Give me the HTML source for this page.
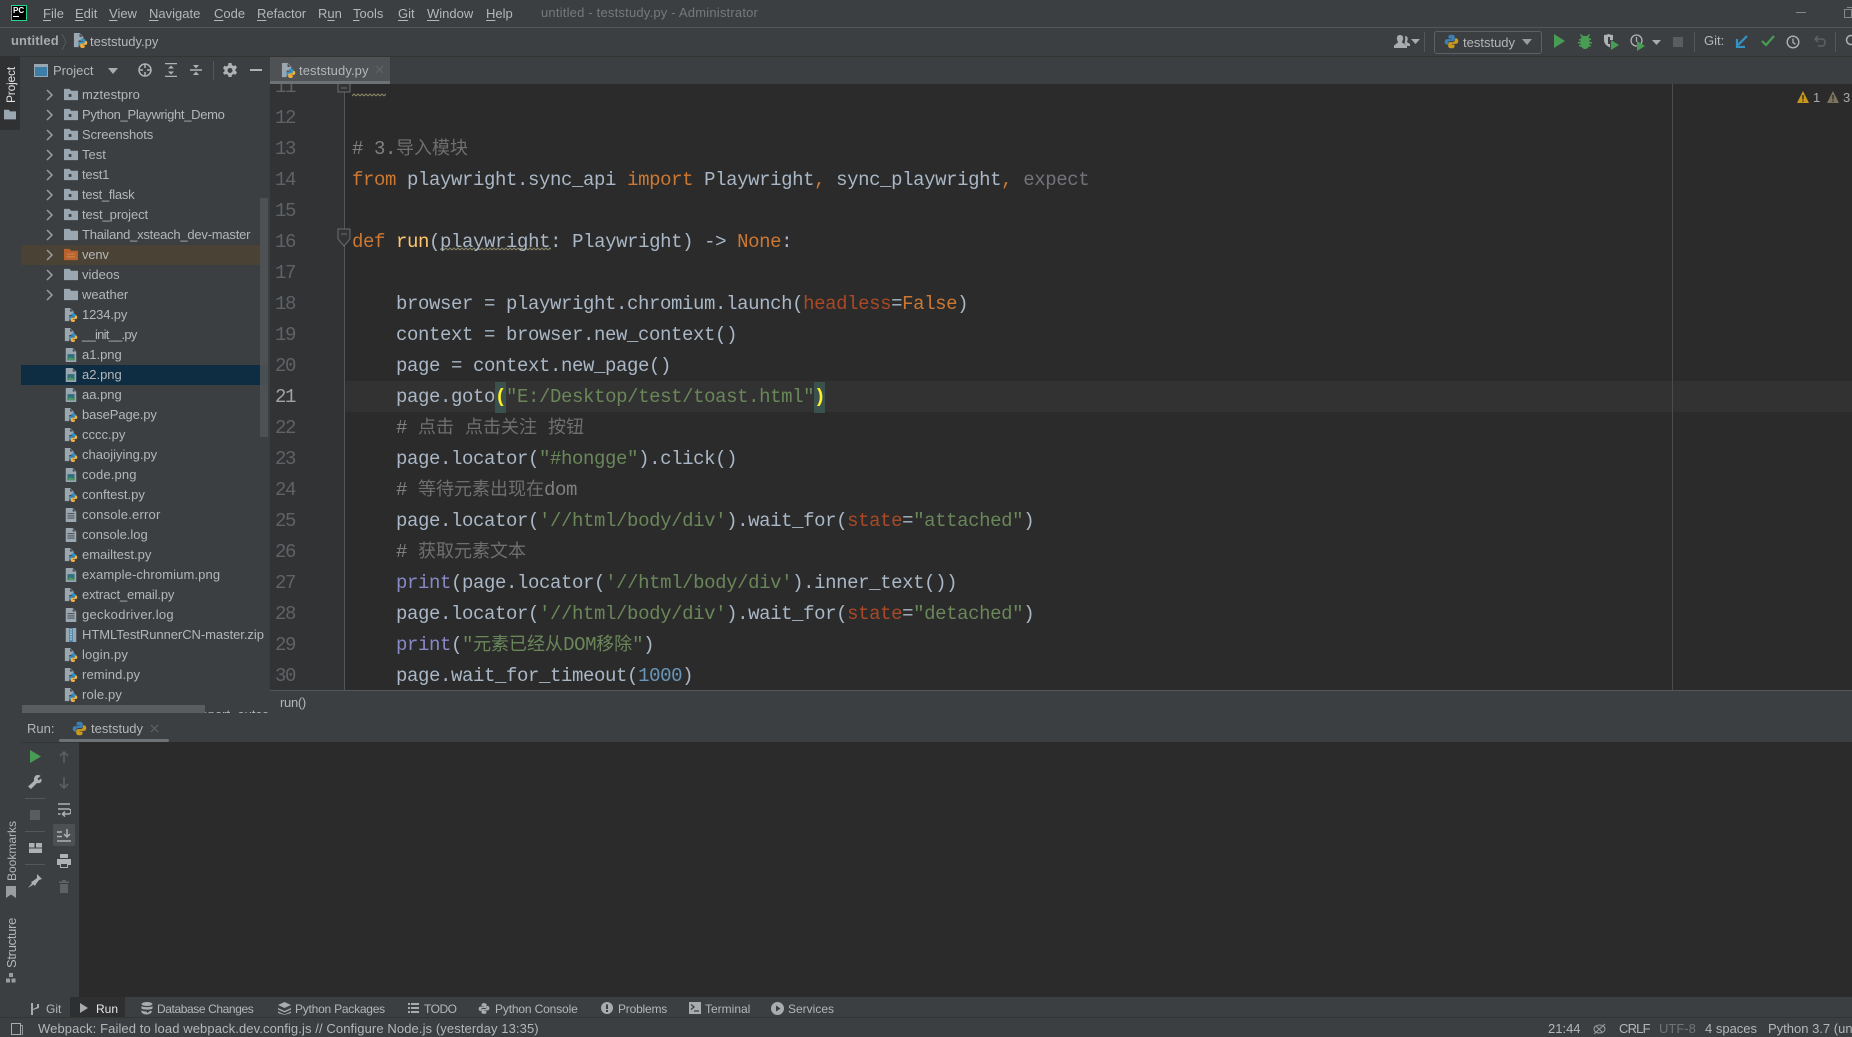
<!DOCTYPE html>
<html><head><meta charset="utf-8"><title>teststudy.py</title>
<style>
html,body{margin:0;padding:0;background:#3c3f41;width:1852px;height:1037px;overflow:hidden}
body{position:relative;font-family:"Liberation Sans","Noto Sans CJK SC",sans-serif;font-size:13px;color:#b4b6b8}
.a,.t,svg.i,.row{position:absolute}
.t{white-space:pre;line-height:20px;height:20px}
svg.i{display:block}
.row{left:21px;width:247px;height:20px}
.row .t{left:61px;top:0;font-size:13px;color:#b4b6b8}
.row svg.ic{position:absolute;left:43px;top:3px;width:14px;height:14px}
.row svg.ch{position:absolute;left:24px;top:4px;width:9px;height:12px}
#ed{position:absolute;left:270px;top:84px;width:1582px;height:606px;overflow:hidden;background:#2b2b2b}
#gut{position:absolute;left:0;top:0;width:74px;height:606px;background:#313335;border-right:1px solid #555}
.l{position:absolute;left:82px;margin-top:1px;height:31px;line-height:31px;white-space:pre;font-family:"Liberation Mono","Noto Sans CJK SC",monospace;font-size:19px;letter-spacing:-.4px;color:#a9b7c6}
.n{position:absolute;left:5px;margin-top:1px;height:31px;line-height:31px;font-family:"Liberation Mono",monospace;font-size:19px;letter-spacing:-1.4px;color:#606366}
.k{color:#cc7832}.c{color:#808080}.s{color:#6a8759}.f{color:#ffc66d}.b{color:#8888c6}.p{color:#aa4926}.d{color:#6897bb}.e{color:#72737a}
.z{font-family:"Noto Sans CJK SC",sans-serif;font-size:18px;letter-spacing:0;line-height:0;color:inherit}
.c .z{color:#6f6f6f}
.br{font-weight:bold;color:#ffef28;background:#3b514d;display:inline-block;height:31px}
.v{position:absolute;transform-origin:0 0;transform:rotate(-90deg);white-space:pre;font-size:13px;line-height:16px}
.m u{text-decoration:underline;text-underline-offset:2px}
.b12{font-size:12px;top:999px}
</style></head><body>
<svg width="0" height="0" style="position:absolute">
<defs>
<symbol id="logo" viewBox="0 0 16 16"><path fill="#3d7fb3" d="M8 .8C5.2.8 4.8 2 4.8 3v1.8H8v.7H3.2C1.8 5.5.8 6.600.8 8.400s1 2.900 2.200 2.900h1.300V9.600c0-1.200 1-2.200 2.200-2.200h3.200c1 0 1.800-.8 1.800-1.800V3c0-1.200-1.300-2.200-3.500-2.200z"/><path fill="#c99a1e" d="M8 15.200c2.800 0 3.200-1.200 3.200-2.200v-1.800H8v-.7h4.800c1.400 0 2.400-1.100 2.400-2.900s-1-2.900-2.200-2.900h-1.300v1.700c0 1.200-1 2.200-2.200 2.200H6.300c-1 0-1.800.8-1.800 1.800V13c0 1.200 1.300 2.200 3.500 2.200z"/></symbol>
<symbol id="py" viewBox="0 0 16 16"><path fill="#9aa7b0" d="M1 0h6l4 4v4H6v7H1z"/><path fill="#3c3f41" d="M7 .8V4h3.200z"/><path fill="#3592c4" d="M10.500 6C8.500 6 8.300 7 8.300 7.600v1.300h2.400v.5H7.300C6.300 9.400 5.600 10.200 5.600 11.500s.7 2.100 1.500 2.100h1V12.400c0-.9.7-1.500 1.500-1.500h2.300c.7 0 1.300-.6 1.300-1.300V7.600C13.200 6.700 12 6 10.500 6z"/><path fill="#f4af3d" d="M10.300 16c2 0 2.200-1 2.200-1.600v-1.300h-2.400v-.5h3.400c1 0 1.700-.8 1.700-2.100s-.7-2.100-1.500-2.100h-1v1.200c0 .9-.7 1.500-1.500 1.500H9c-.7 0-1.300.6-1.300 1.300v2C7.700 15.300 8.800 16 10.300 16z"/></symbol>
<symbol id="img" viewBox="0 0 16 16"><path fill="#9aa7b0" d="M2 0h8l4 4v12H2z"/><path fill="#3c3f41" d="M10 .8V4h3.200z"/><rect x="4" y="7" width="8" height="7" fill="#2f6f7f"/><path fill="#4e9a5a" d="M4 14l3-4 2 2 1-1 2 3z"/></symbol>
<symbol id="txt" viewBox="0 0 16 16"><path fill="#9aa7b0" d="M2 0h8l4 4v12H2z"/><path fill="#3c3f41" d="M10 .8V4h3.200zM4 6h8v1H4zM4 8.500h8v1H4zM4 11h8v1H4z"/></symbol>
<symbol id="zip" viewBox="0 0 16 16"><path fill="#9aa7b0" d="M2 0h12v16H2z"/><rect x="6" y="0" width="4" height="16" fill="#3c7ea8"/><path fill="#cfe3ee" d="M7 1h2v1H7zM7 3h2v1H7zM7 5h2v1H7zM7 7h2v1H7zM7 9h2v1H7zM7 11h2v1H7zM7 13h2v1H7z"/></symbol>
<symbol id="fm" viewBox="0 0 15 15"><path fill="#9aa7b0" d="M0 1h6l1.500 2H15v10H0z"/><rect x="5" y="6.500" width="3" height="3" fill="#3c3f41"/></symbol>
<symbol id="fo" viewBox="0 0 15 15"><path fill="#9aa7b0" d="M0 1h6l1.500 2H15v10H0z"/></symbol>
<symbol id="fv" viewBox="0 0 15 15"><path fill="#b8622f" d="M0 1h6l1.500 2H15v10H0z"/><path fill="#d98a4a" d="M3 6h9v1H3zM3 9h9v1H3z"/></symbol>
<symbol id="ch" viewBox="0 0 9 12"><path fill="none" stroke="#9a9c9e" stroke-width="1.500" d="M2 1l5 5-5 5"/></symbol>
<pattern id="w" width="4" height="4" patternUnits="userSpaceOnUse"><path d="M0 3l2-2 2 2" fill="none" stroke="#8a8a68" stroke-width="1"/></pattern>
</defs></svg>

<!-- top lines -->
<div class="a" style="left:0;top:27px;width:1852px;height:1px;background:#55585a"></div>
<div class="a" style="left:0;top:56px;width:1852px;height:1px;background:#323532"></div>

<!-- PC logo -->
<div class="a" style="left:11px;top:5px;width:14px;height:14px;background:#000;border:1px solid #21d789"></div>
<div class="a" style="left:13px;top:6px;color:#fff;font:bold 8px/9px 'Liberation Sans',sans-serif">PC</div>
<div class="a" style="left:13px;top:16px;width:6px;height:1px;background:#fff"></div>

<!-- menu -->
<div class="t m" style="left:43px;top:4px"><u>F</u>ile</div>
<div class="t m" style="left:75px;top:4px"><u>E</u>dit</div>
<div class="t m" style="left:109px;top:4px"><u>V</u>iew</div>
<div class="t m" style="left:149px;top:4px"><u>N</u>avigate</div>
<div class="t m" style="left:214px;top:4px"><u>C</u>ode</div>
<div class="t m" style="left:257px;top:4px"><u>R</u>efactor</div>
<div class="t m" style="left:318px;top:4px">R<u>u</u>n</div>
<div class="t m" style="left:353px;top:4px"><u>T</u>ools</div>
<div class="t m" style="left:398px;top:4px"><u>G</u>it</div>
<div class="t m" style="left:427px;top:4px"><u>W</u>indow</div>
<div class="t m" style="left:486px;top:4px"><u>H</u>elp</div>
<div class="t" style="left:541px;top:3px;color:#76797b;letter-spacing:.2px">untitled - teststudy.py - Administrator</div>
<div class="a" style="left:1796px;top:12px;width:10px;height:1px;background:#85888a"></div>
<div class="a" style="left:1844px;top:9px;width:6px;height:7px;border:1px solid #85888a"></div>
<div class="a" style="left:1847px;top:7px;width:6px;height:7px;border:1px solid #85888a;border-left:0;border-bottom:0"></div>

<!-- breadcrumb -->
<div class="t" style="left:11px;top:31px;font-weight:bold;color:#a8aaac;letter-spacing:.1px">untitled</div>
<svg class="i" style="left:61px;top:34px" width="6" height="16"><path d="M1 0l4 8-4 8" fill="none" stroke="#55585a"/></svg>
<svg class="i" style="left:73px;top:33px" width="15" height="15"><use href="#py"/></svg>
<div class="t" style="left:90px;top:32px">teststudy.py</div>

<!-- toolbar right -->
<svg class="i" style="left:1393px;top:34px" width="20" height="16" viewBox="0 0 20 16"><path fill="#a9abad" d="M7 1c2.500 0 3.500 2 3 4.500-.3 1.300-1 2-1 3l5 3v2.500H1v-2.500l4-3c0-1-.7-1.700-1-3C3.500 3 4.500 1 7 1z"/><path fill="#a9abad" d="M12 2c2 0 3 1.500 2.700 3.500-.2 1.200-.8 2-.8 2.500l3.100 2v2h-2.500l-3-2.500c.5-1.500 1-3 .5-7.500z"/></svg>
<svg class="i" style="left:1411px;top:39px" width="9" height="6"><path d="M0 0h9L4.500 5z" fill="#a9abad"/></svg>
<div class="a" style="left:1424px;top:32px;width:1px;height:20px;background:#55585a"></div>
<div class="a" style="left:1434px;top:31px;width:106px;height:21px;border:1px solid #5e6163;border-radius:3px"></div>
<svg class="i" style="left:1444px;top:34px" width="15" height="15"><use href="#logo"/></svg>
<div class="t" style="left:1463px;top:32px;font-size:13px;color:#b4b6b8;line-height:22px">teststudy</div>
<svg class="i" style="left:1522px;top:39px" width="10" height="6"><path d="M0 0h10L5 6z" fill="#9a9c9e"/></svg>
<svg class="i" style="left:1554px;top:34px" width="11" height="14"><path d="M0 0l11 7-11 7z" fill="#499c54"/></svg>
<svg class="i" style="left:1578px;top:34px" width="14" height="15" viewBox="0 0 14 15"><path fill="#499c54" d="M3 0l2 2h4l2-2 1 1-1.500 2 1 1.500H13v1.500h-1.500V8H14v1.500h-2.500v1.500H13v1.500h-2C10 14 8.500 15 7 15S4 14 3 12.500H1V11h1.500V9.500H0V8h2.500V6.500H1V5h1.500l1-1.500L2 1z"/></svg>
<svg class="i" style="left:1604px;top:34px" width="16" height="16" viewBox="0 0 16 16"><path fill="#afb1b3" d="M0 1c2 0 3-.5 4.500-1C6 .5 7 1 9 1v5H6v7.500C3 12 0 10 0 6z"/><path fill="#3c3f41" d="M4 3h2v7H4z"/><path fill="#499c54" d="M7 6l8 5-8 5z"/></svg>
<svg class="i" style="left:1630px;top:34px" width="16" height="17" viewBox="0 0 16 17"><circle cx="6.500" cy="6.500" r="5.500" fill="none" stroke="#afb1b3" stroke-width="1.300"/><path d="M6.500 3v4l2 2" fill="none" stroke="#afb1b3" stroke-width="1.200"/><path fill="#499c54" d="M7 7l8 5-8 5z"/></svg>
<svg class="i" style="left:1652px;top:40px" width="9" height="6"><path d="M0 0h9L4.500 5z" fill="#a9abad"/></svg>
<div class="a" style="left:1673px;top:37px;width:10px;height:10px;background:#5a5c5e"></div>
<div class="a" style="left:1694px;top:32px;width:1px;height:20px;background:#55585a"></div>
<div class="t" style="left:1704px;top:31px">Git:</div>
<svg class="i" style="left:1735px;top:35px" width="13" height="13"><path d="M12 1L3 10M2 4v8h8" fill="none" stroke="#3592c4" stroke-width="2.200"/></svg>
<svg class="i" style="left:1761px;top:35px" width="14" height="12"><path d="M1 6l4 4 8-9" fill="none" stroke="#499c54" stroke-width="2.200"/></svg>
<svg class="i" style="left:1786px;top:35px" width="14" height="14"><circle cx="7" cy="7" r="5.800" fill="none" stroke="#afb1b3" stroke-width="1.400"/><path d="M7 3.500V7.500l2.500 1.800" fill="none" stroke="#afb1b3" stroke-width="1.300"/></svg>
<svg class="i" style="left:1813px;top:35px" width="14" height="14"><path d="M5 1L2 4l3 3M2 4h7c2 0 3 1.500 3 3.500S11 11 9 11H5" fill="none" stroke="#5f6163" stroke-width="1.500"/></svg>
<div class="a" style="left:1835px;top:32px;width:1px;height:20px;background:#55585a"></div>
<svg class="i" style="left:1845px;top:34px" width="7" height="14"><circle cx="6" cy="6" r="4.500" fill="none" stroke="#afb1b3" stroke-width="1.500"/></svg>

<!-- left strip -->
<div class="a" style="left:0;top:56px;width:20px;height:74px;background:#2f3133"></div>
<div class="v" style="left:3px;top:103px;color:#e0e0e0;font-size:12px;letter-spacing:-.2px">Project</div>
<svg class="i" style="left:4px;top:109px" width="12" height="12"><use href="#fo"/></svg>
<div class="v" style="left:4px;top:881px;font-size:12px">Bookmarks</div>
<svg class="i" style="left:6px;top:886px" width="10" height="12"><path d="M0 0h10v12L5 8.500 0 12z" fill="#9a9c9e"/></svg>
<div class="v" style="left:4px;top:968px;letter-spacing:-.3px">Structure</div>
<svg class="i" style="left:6px;top:973px" width="10" height="10"><path d="M3 0h4v4H3zM0 5.500h4v4H0zM5.500 5.500h4v4h-4z" fill="#9a9c9e"/></svg>

<!-- project header -->
<svg class="i" style="left:34px;top:64px" width="14" height="13"><rect x=".5" y=".5" width="13" height="12" fill="#3c7ea8" stroke="#9aa7b0"/><rect x="1" y="1" width="12" height="2" fill="#9aa7b0"/></svg>
<div class="t" style="left:53px;top:61px;font-size:13px">Project</div>
<svg class="i" style="left:108px;top:68px" width="10" height="6"><path d="M0 0h10L5 6z" fill="#a9abad"/></svg>
<svg class="i" style="left:138px;top:63px" width="14" height="14"><circle cx="7" cy="7" r="6" fill="none" stroke="#afb1b3" stroke-width="1.500"/><path d="M7 1v4M7 9v4M1 7h4M9 7h4" stroke="#afb1b3" stroke-width="1.500"/></svg>
<svg class="i" style="left:164px;top:63px" width="14" height="14"><path d="M1 .5h12M1 13.500h12" stroke="#afb1b3" stroke-width="1.500"/><path d="M7 2.500l3 3H4zM7 11.500l-3-3h6z" fill="#afb1b3"/></svg>
<svg class="i" style="left:189px;top:63px" width="14" height="14"><path d="M1 7h12" stroke="#afb1b3" stroke-width="1.500"/><path d="M7 5.500L4 2h6zM7 8.500l3 3.500H4z" fill="#afb1b3"/></svg>
<div class="a" style="left:213px;top:61px;width:1px;height:19px;background:#55585a"></div>
<svg class="i" style="left:223px;top:63px" width="14" height="14" viewBox="0 0 14 14"><path fill="#afb1b3" fill-rule="evenodd" d="M5.500 0h3l.4 2 1.700 1 2-.7 1.400 2.500-1.600 1.400v1.600l1.600 1.400-1.400 2.500-2-.7-1.700 1-.4 2h-3l-.4-2-1.700-1-2 .7L0 9.700l1.600-1.400V6.700L0 5.300l1.400-2.500 2 .7 1.700-1zM7 5a2.500 2.500 0 100 5 2.500 2.500 0 000-5z"/></svg>
<div class="a" style="left:250px;top:69px;width:12px;height:2px;background:#afb1b3"></div>

<!-- tab -->
<div class="a" style="left:270px;top:57px;width:120px;height:27px;background:#4e5254"></div>
<div class="a" style="left:270px;top:81px;width:120px;height:3px;background:#6d7276"></div>
<svg class="i" style="left:281px;top:63px" width="15" height="15"><use href="#py"/></svg>
<div class="t" style="left:299px;top:61px;letter-spacing:.1px">teststudy.py</div>
<svg class="i" style="left:375px;top:65px" width="9" height="9"><path d="M1 1l7 7M8 1L1 8" stroke="#606365" stroke-width="1.200"/></svg>

<!-- project tree -->
<div class="a" style="left:21px;top:85px;width:247px;height:628px;overflow:hidden">
<div style="position:absolute;left:-21px;top:-85px;width:300px;height:800px">
<div class="row" style="top:245px;background:#4a4235"></div>
<div class="row" style="top:365px;background:#0e2c42"></div>
<div class="row" style="top:85px"><svg class="ch"><use href="#ch"/></svg><svg class="ic"><use href="#fm"/></svg><div class="t" style="letter-spacing:.1px">mztestpro</div></div>
<div class="row" style="top:105px"><svg class="ch"><use href="#ch"/></svg><svg class="ic"><use href="#fm"/></svg><div class="t" style="letter-spacing:-.32px">Python_Playwright_Demo</div></div>
<div class="row" style="top:125px"><svg class="ch"><use href="#ch"/></svg><svg class="ic"><use href="#fm"/></svg><div class="t" style="letter-spacing:-.1px">Screenshots</div></div>
<div class="row" style="top:145px"><svg class="ch"><use href="#ch"/></svg><svg class="ic"><use href="#fm"/></svg><div class="t">Test</div></div>
<div class="row" style="top:165px"><svg class="ch"><use href="#ch"/></svg><svg class="ic"><use href="#fm"/></svg><div class="t" style="letter-spacing:-.2px">test1</div></div>
<div class="row" style="top:185px"><svg class="ch"><use href="#ch"/></svg><svg class="ic"><use href="#fm"/></svg><div class="t" style="letter-spacing:-.25px">test_flask</div></div>
<div class="row" style="top:205px"><svg class="ch"><use href="#ch"/></svg><svg class="ic"><use href="#fm"/></svg><div class="t" style="letter-spacing:-.1px">test_project</div></div>
<div class="row" style="top:225px"><svg class="ch"><use href="#ch"/></svg><svg class="ic"><use href="#fo"/></svg><div class="t" style="letter-spacing:-.22px">Thailand_xsteach_dev-master</div></div>
<div class="row" style="top:245px"><svg class="ch"><use href="#ch"/></svg><svg class="ic"><use href="#fv"/></svg><div class="t" style="letter-spacing:-.2px">venv</div></div>
<div class="row" style="top:265px"><svg class="ch"><use href="#ch"/></svg><svg class="ic"><use href="#fo"/></svg><div class="t">videos</div></div>
<div class="row" style="top:285px"><svg class="ch"><use href="#ch"/></svg><svg class="ic"><use href="#fo"/></svg><div class="t">weather</div></div>
<div class="row" style="top:305px"><svg class="ic"><use href="#py"/></svg><div class="t" style="letter-spacing:-.15px">1234.py</div></div>
<div class="row" style="top:325px"><svg class="ic"><use href="#py"/></svg><div class="t" style="letter-spacing:-.75px">__init__.py</div></div>
<div class="row" style="top:345px"><svg class="ic"><use href="#img"/></svg><div class="t">a1.png</div></div>
<div class="row" style="top:365px"><svg class="ic"><use href="#img"/></svg><div class="t">a2.png</div></div>
<div class="row" style="top:385px"><svg class="ic"><use href="#img"/></svg><div class="t">aa.png</div></div>
<div class="row" style="top:405px"><svg class="ic"><use href="#py"/></svg><div class="t" style="letter-spacing:-.1px">basePage.py</div></div>
<div class="row" style="top:425px"><svg class="ic"><use href="#py"/></svg><div class="t">cccc.py</div></div>
<div class="row" style="top:445px"><svg class="ic"><use href="#py"/></svg><div class="t">chaojiying.py</div></div>
<div class="row" style="top:465px"><svg class="ic"><use href="#img"/></svg><div class="t" style="letter-spacing:.15px">code.png</div></div>
<div class="row" style="top:485px"><svg class="ic"><use href="#py"/></svg><div class="t">conftest.py</div></div>
<div class="row" style="top:505px"><svg class="ic"><use href="#txt"/></svg><div class="t" style="letter-spacing:.2px">console.error</div></div>
<div class="row" style="top:525px"><svg class="ic"><use href="#txt"/></svg><div class="t">console.log</div></div>
<div class="row" style="top:545px"><svg class="ic"><use href="#py"/></svg><div class="t">emailtest.py</div></div>
<div class="row" style="top:565px"><svg class="ic"><use href="#img"/></svg><div class="t" style="letter-spacing:.12px">example-chromium.png</div></div>
<div class="row" style="top:585px"><svg class="ic"><use href="#py"/></svg><div class="t" style="letter-spacing:-.15px">extract_email.py</div></div>
<div class="row" style="top:605px"><svg class="ic"><use href="#txt"/></svg><div class="t" style="letter-spacing:.3px">geckodriver.log</div></div>
<div class="row" style="top:625px"><svg class="ic"><use href="#zip"/></svg><div class="t" style="letter-spacing:-.05px">HTMLTestRunnerCN-master.zip</div></div>
<div class="row" style="top:645px"><svg class="ic"><use href="#py"/></svg><div class="t" style="letter-spacing:.15px">login.py</div></div>
<div class="row" style="top:665px"><svg class="ic"><use href="#py"/></svg><div class="t" style="letter-spacing:.12px">remind.py</div></div>
<div class="row" style="top:685px"><svg class="ic"><use href="#py"/></svg><div class="t" style="letter-spacing:.15px">role.py</div></div>
<div class="row" style="top:705px"><svg class="ic"><use href="#txt"/></svg><div class="t">pytest_htmlreports_report_outcome</div></div>
</div></div>
<div class="a" style="left:260px;top:198px;width:8px;height:239px;background:#4f5356;opacity:.9"></div>
<div class="a" style="left:22px;top:705px;width:183px;height:8px;background:#5a5d5f"></div>

<!-- editor -->
<div id="ed">
<div id="gut"></div>
<div class="a" style="left:75px;top:297px;width:1507px;height:31px;background:#323232"></div>
<div class="a" style="left:1402px;top:0;width:1px;height:606px;background:#4a4c4e"></div>
<div class="n" style="top:-13px">11</div>
<div class="n" style="top:18px">12</div>
<div class="n" style="top:49px">13</div>
<div class="n" style="top:80px">14</div>
<div class="n" style="top:111px">15</div>
<div class="n" style="top:142px">16</div>
<div class="n" style="top:173px">17</div>
<div class="n" style="top:204px">18</div>
<div class="n" style="top:235px">19</div>
<div class="n" style="top:266px">20</div>
<div class="n" style="top:297px;color:#a4a3a3">21</div>
<div class="n" style="top:328px">22</div>
<div class="n" style="top:359px">23</div>
<div class="n" style="top:390px">24</div>
<div class="n" style="top:421px">25</div>
<div class="n" style="top:452px">26</div>
<div class="n" style="top:483px">27</div>
<div class="n" style="top:514px">28</div>
<div class="n" style="top:545px">29</div>
<div class="n" style="top:576px">30</div>
<svg class="i" style="left:67px;top:0" width="16" height="9"><path d="M1 0v8h12V0M4 4h6" fill="#313335" stroke="#6a6c6e"/></svg>
<svg class="i" style="left:67px;top:144px" width="16" height="20"><path d="M1 1h12v10l-6 7-6-7zM4 6h6" fill="#313335" stroke="#6a6c6e"/></svg>
<svg class="i" style="left:82px;top:9px" width="34" height="4"><rect width="34" height="4" fill="url(#w)"/></svg>
<svg class="i" style="left:170px;top:163px" width="111" height="4"><rect width="111" height="4" fill="url(#w)"/></svg>

<div class="l c" style="top:49px"># 3.<span class="z">导入模块</span></div>
<div class="l" style="top:80px"><span class="k">from</span> playwright.sync_api <span class="k">import</span> Playwright<span class="k">,</span> sync_playwright<span class="k">,</span> <span class="e">expect</span></div>
<div class="l" style="top:142px"><span class="k">def</span> <span class="f">run</span>(playwright: Playwright) -&gt; <span class="k">None</span>:</div>
<div class="l" style="top:204px">    browser = playwright.chromium.launch(<span class="p">headless</span>=<span class="k">False</span>)</div>
<div class="l" style="top:235px">    context = browser.new_context()</div>
<div class="l" style="top:266px">    page = context.new_page()</div>
<div class="l" style="top:297px">    page.goto<span class="br">(</span><span class="s">"E:/Desktop/test/toast.html"</span><span class="br">)</span></div>
<div class="l c" style="top:328px">    # <span class="z">点击</span> <span class="z">点击关注</span> <span class="z">按钮</span></div>
<div class="l" style="top:359px">    page.locator(<span class="s">"#hongge"</span>).click()</div>
<div class="l c" style="top:390px">    # <span class="z">等待元素出现在</span>dom</div>
<div class="l" style="top:421px">    page.locator(<span class="s">'//html/body/div'</span>).wait_for(<span class="p">state</span>=<span class="s">"attached"</span>)</div>
<div class="l c" style="top:452px">    # <span class="z">获取元素文本</span></div>
<div class="l" style="top:483px">    <span class="b">print</span>(page.locator(<span class="s">'//html/body/div'</span>).inner_text())</div>
<div class="l" style="top:514px">    page.locator(<span class="s">'//html/body/div'</span>).wait_for(<span class="p">state</span>=<span class="s">"detached"</span>)</div>
<div class="l" style="top:545px">    <span class="b">print</span>(<span class="s">"<span class="z">元素已经从</span>DOM<span class="z">移除</span>"</span>)</div>
<div class="l" style="top:576px">    page.wait_for_timeout(<span class="d">1000</span>)</div>
</div>

<!-- warnings -->
<svg class="i" style="left:1797px;top:91px" width="12" height="12"><path d="M6 0l6 12H0z" fill="#c9971c"/><path d="M5.300 4h1.400v4.500H5.300zM5.300 9.500h1.400v1.300H5.300z" fill="#2b2b2b"/></svg>
<div class="t" style="left:1813px;top:88px;color:#a9a9a9">1</div>
<svg class="i" style="left:1827px;top:91px" width="12" height="12"><path d="M6 0l6 12H0z" fill="#7d735e"/><path d="M5.300 4h1.400v4.500H5.300zM5.300 9.500h1.400v1.300H5.300z" fill="#2b2b2b"/></svg>
<div class="t" style="left:1843px;top:88px;color:#a9a9a9">3</div>

<!-- editor breadcrumb -->
<div class="a" style="left:270px;top:690px;width:1582px;height:1px;background:#55585a"></div>
<div class="t" style="left:280px;top:693px;color:#b4b6b8;letter-spacing:-.3px">run()</div>

<!-- run panel -->
<div class="t" style="left:27px;top:719px">Run:</div>
<svg class="i" style="left:72px;top:721px" width="15" height="15"><use href="#logo"/></svg>
<div class="t" style="left:91px;top:719px">teststudy</div>
<svg class="i" style="left:150px;top:724px" width="9" height="9"><path d="M1 1l7 7M8 1L1 8" stroke="#606365" stroke-width="1.200"/></svg>
<div class="a" style="left:59px;top:739px;width:110px;height:3px;border-radius:2px;background:#6d7276"></div>
<div class="a" style="left:21px;top:742px;width:1831px;height:1px;background:#323532"></div>
<div class="a" style="left:79px;top:742px;width:1773px;height:255px;background:#2b2b2b"></div>

<svg class="i" style="left:30px;top:750px" width="11" height="13"><path d="M0 0l11 6.500L0 13z" fill="#499c54"/></svg>
<svg class="i" style="left:28px;top:775px" width="14" height="14" viewBox="0 0 14 14"><path fill="#afb1b3" d="M9.500 0C11 0 12 .3 12.500 1L9.500 3.500l1 2 2.500-2c.7 1 .8 2.500 0 3.500-1 1.300-2.500 1.500-4 1L3 14l-3-2.500L6 6C5.500 3 7 0 9.500 0z"/></svg>
<div class="a" style="left:25px;top:798px;width:20px;height:1px;background:#55585a"></div>
<div class="a" style="left:30px;top:810px;width:10px;height:10px;background:#5a5c5e"></div>
<div class="a" style="left:25px;top:831px;width:20px;height:1px;background:#55585a"></div>
<svg class="i" style="left:29px;top:843px" width="13" height="10"><path d="M0 0h5.500v4.500H0zM7 0h6v4.500H7zM0 5.500h13V10H0z" fill="#afb1b3"/></svg>
<div class="a" style="left:25px;top:864px;width:20px;height:1px;background:#55585a"></div>
<svg class="i" style="left:28px;top:874px" width="14" height="14"><path d="M9 0l5 5-3 1-3 4-1 2-4-4 2-1 4-3zM4 9l1.500 1.500L0 14z" fill="#afb1b3"/></svg>

<svg class="i" style="left:59px;top:751px" width="10" height="12"><path d="M5 12V1M1 5l4-4 4 4" fill="none" stroke="#5f6163" stroke-width="1.500"/></svg>
<svg class="i" style="left:59px;top:777px" width="10" height="12"><path d="M5 0v11M1 7l4 4 4-4" fill="none" stroke="#5f6163" stroke-width="1.500"/></svg>
<svg class="i" style="left:57px;top:803px" width="14" height="14"><path d="M1 1h12M1 6h10.500a2.500 2.500 0 010 5H6M8 8.500L5.500 11 8 13.500M1 11h2.500" fill="none" stroke="#afb1b3" stroke-width="1.500"/></svg>
<div class="a" style="left:53px;top:824px;width:22px;height:22px;background:#4c5052;border-radius:2px"></div>
<svg class="i" style="left:57px;top:828px" width="14" height="14"><path d="M0 13h14M0 4h5M0 8.500h5M10 1v7M7 6l3 3 3-3" fill="none" stroke="#afb1b3" stroke-width="1.500"/></svg>
<svg class="i" style="left:57px;top:854px" width="14" height="14"><path d="M3 0h8v4H3zM0 5h14v6h-3V9H3v2H0z" fill="#afb1b3"/><rect x="3.500" y="9.500" width="7" height="4" fill="none" stroke="#afb1b3"/></svg>
<svg class="i" style="left:59px;top:880px" width="10" height="13"><path d="M3 0h4v1.500h3V3H0V1.500h3zM1 4h8v9H1z" fill="#5f6163"/></svg>

<!-- bottom tool bar -->
<div class="a" style="left:70px;top:997px;width:55px;height:20px;background:#2d2f30"></div>
<svg class="i" style="left:30px;top:1003px" width="9" height="12"><path d="M1 0h2v12H1zM7 1h2v4L3 7V6l4-2z" fill="#a9abad"/></svg>
<div class="t b12" style="left:46px">Git</div>
<svg class="i" style="left:80px;top:1003px" width="8" height="10"><path d="M0 0l8 5-8 5z" fill="#a9abad"/></svg>
<div class="t b12" style="left:96px;color:#e8e8e8">Run</div>
<svg class="i" style="left:141px;top:1002px" width="12" height="13"><ellipse cx="6" cy="2" rx="5.500" ry="2" fill="#a9abad"/><path d="M.5 4c1 1.500 10 1.500 11 0v2.500c-1 1.500-10 1.500-11 0zM.5 8c1 1.500 4 1.500 5 1.500l1 1.500 3-2.500 1.500 1c-.5 1.500-3 3-5.500 3S.5 11 .5 10z" fill="#a9abad"/></svg>
<div class="t b12" style="left:157px;letter-spacing:-.4px">Database Changes</div>
<svg class="i" style="left:278px;top:1002px" width="13" height="13"><path d="M6.500 0l6.500 3-6.500 3L0 3zM0 6l6.500 3L13 6v1.500L6.500 10.500 0 7.500zM0 9.500l6.500 3 6.500-3V11l-6.500 2L0 11z" fill="#a9abad"/></svg>
<div class="t b12" style="left:295px;letter-spacing:-.23px">Python Packages</div>
<svg class="i" style="left:408px;top:1003px" width="11" height="10"><path d="M0 0h2v2H0zM3 0h8v2H3zM0 4h2v2H0zM3 4h8v2H3zM0 8h2v2H0zM3 8h8v2H3z" fill="#a9abad"/></svg>
<div class="t b12" style="left:424px;letter-spacing:-.5px">TODO</div>
<svg class="i" style="left:478px;top:1002px" width="12" height="13" viewBox="0 0 16 16"><path fill="#a9abad" d="M8 .8C5.200.8 4.800 2 4.800 3v1.800H8v.7H3.200C1.800 5.500.8 6.600.8 8.400s1 2.900 2.200 2.900h1.300V9.600c0-1.200 1-2.200 2.200-2.200h3.200c1 0 1.800-.8 1.800-1.800V3C11.500 1.800 10.200.8 8 .8zM8 15.200c2.800 0 3.200-1.200 3.200-2.200v-1.800H8v-.7h4.800c1.400 0 2.400-1.100 2.400-2.900s-1-2.900-2.200-2.900h-1.300v1.700c0 1.200-1 2.200-2.200 2.200H6.300c-1 0-1.800.8-1.800 1.800V13c0 1.200 1.300 2.200 3.500 2.200z"/></svg>
<div class="t b12" style="left:495px;letter-spacing:-.15px">Python Console</div>
<svg class="i" style="left:601px;top:1002px" width="12" height="12"><circle cx="6" cy="6" r="6" fill="#a9abad"/><path d="M5 2.500h2v4.500H5zM5 8h2v2H5z" fill="#3c3f41"/></svg>
<div class="t b12" style="left:618px;letter-spacing:-.2px">Problems</div>
<svg class="i" style="left:689px;top:1002px" width="12" height="12"><rect width="12" height="12" fill="#a9abad"/><path d="M2 2.500l3 2.500-3 2.500M5 9h5" fill="none" stroke="#3c3f41" stroke-width="1.300"/></svg>
<div class="t b12" style="left:705px">Terminal</div>
<svg class="i" style="left:771px;top:1002px" width="13" height="13"><circle cx="6.500" cy="6.500" r="6.500" fill="#a9abad"/><path d="M5 3.500l4.500 3-4.500 3z" fill="#3c3f41"/></svg>
<div class="t b12" style="left:788px">Services</div>

<!-- status bar -->
<div class="a" style="left:0;top:1017px;width:1852px;height:1px;background:#323532"></div>
<svg class="i" style="left:11px;top:1023px" width="12" height="12"><rect x=".5" y=".5" width="9" height="11" fill="none" stroke="#a9abad"/><path d="M10 2.500h1.500V12H3" fill="none" stroke="#a9abad" stroke-width=".8"/></svg>
<div class="t" style="left:38px;top:1019px;letter-spacing:.1px">Webpack: Failed to load webpack.dev.config.js // Configure Node.js (yesterday 13:35)</div>
<div class="t" style="left:1548px;top:1019px">21:44</div>
<svg class="i" style="left:1593px;top:1023px" width="13" height="12"><ellipse cx="6.500" cy="6" rx="5.500" ry="4" fill="none" stroke="#9a9c9e"/><path d="M1 11L12 1M3 3l6 6" fill="none" stroke="#9a9c9e"/></svg>
<div class="t" style="left:1619px;top:1019px;letter-spacing:-.8px">CRLF</div>
<div class="t" style="left:1659px;top:1019px;color:#707375">UTF-8</div>
<div class="t" style="left:1705px;top:1019px">4 spaces</div>
<div class="t" style="left:1768px;top:1019px">Python 3.7 (untitled)</div>
</body></html>
